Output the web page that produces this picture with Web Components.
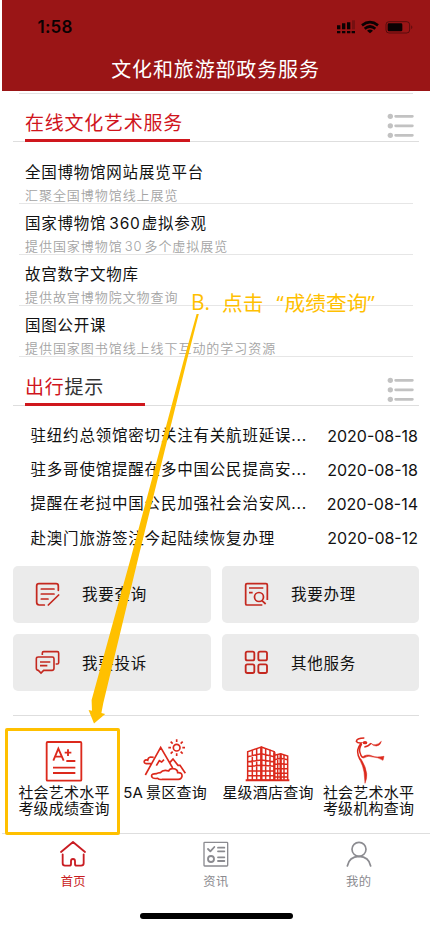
<!DOCTYPE html>
<html lang="zh-CN">
<head>
<meta charset="utf-8">
<title>文化和旅游部政务服务</title>
<style>
html,body{margin:0;padding:0;background:#fff}
body{font-family:Inter,"Noto Sans CJK SC",sans-serif;color:#111;width:432px;height:935px;overflow:hidden}
</style>
</head>
<body>
<service-app></service-app>
<script>
const define = (name, html) => {
  const t = document.createElement('template');
  t.innerHTML = html;
  customElements.define(name, class extends HTMLElement {
    constructor() {
      super();
      this.attachShadow({ mode: 'open' }).append(t.content.cloneNode(true));
    }
  });
};

define('status-bar', `<style>
:host{display:flex;height:53px;align-items:center;justify-content:space-between;padding:0 16px 0 35.5px;box-sizing:border-box;color:#0b0203}
b{font-size:17px;font-weight:600;line-height:20px;letter-spacing:.25px}
svg{display:block}
</style><b>1:58</b>
<svg width="78" height="16" viewBox="1010 54 234 48"><g fill="#0b0203">
<path d="M1013 90h10v7h-10zM1028 90h10v7h-10zM1043 90h10v7h-10zM1057 90h10v7h-10zM1013 73h10v12h-10zM1028 67h10v18h-10zM1043 64h10v21h-10z"/><path d="M1058 58h9v27h-9z" opacity=".25"/>
<path d="M1112 97l-9-8q9-7 18 0z"/></g>
<path d="M1088 73q24-19 48 0M1096 83q16-13 32 0" fill="none" stroke="#0b0203" stroke-width="8"/>
<rect x="1160" y="62" width="71" height="34" rx="9" fill="none" stroke="#0b0203" stroke-width="2.5" opacity=".55"/><rect x="1165" y="67" width="44" height="24" rx="4" fill="#0b0203"/><path d="M1236 73q6 6 0 12z" fill="#0b0203" opacity=".5"/></svg>`);

define('app-header', `<style>
:host{display:block;height:91px;margin:0 2px;background:#9a1516;color:#fff}
h1{margin:0;height:34px;line-height:34px;text-align:center;font-size:20px;font-weight:400;letter-spacing:.85px;padding-right:1px}
</style><status-bar></status-bar><h1><slot></slot></h1>`);

define('section-head', `<style>
:host{display:flex;justify-content:space-between;box-sizing:border-box;margin:0 13px;padding:0 4px 0 12px;border-bottom:1px solid #dedede;color:#333}
h2{margin:0 0 -1px;font-size:19px;font-weight:400;letter-spacing:.75px;line-height:37.5px;height:34px;border-bottom:3px solid #cf171d;width:var(--bar,165px)}
::slotted(em){font-style:normal;color:#d0151d}
svg{display:block;margin-top:7px}
</style><h2><slot></slot></h2>
<svg width="28" height="28" viewBox="0 0 84 84"><g fill="#c2c2c2"><circle cx="10" cy="13" r="8"/><circle cx="10" cy="41.5" r="8"/><circle cx="10" cy="70" r="8"/></g><path d="M26 13h50M26 41.500h50M26 70h50" stroke="#c2c2c2" stroke-width="8.5" stroke-linecap="round"/></svg>`);

define('service-row', `<style>
:host{display:block;box-sizing:border-box;height:51px;margin:0 19px;padding:9px 0 0 6px;border-bottom:1px solid #e6e6e6}
.t{font-size:15.5px;font-weight:400;line-height:22px;height:22px;letter-spacing:.77px;white-space:nowrap}
.s{font-size:13px;line-height:18px;height:18px;padding-top:2px;letter-spacing:.95px;color:#a4a4a4;font-weight:350;white-space:nowrap}
::slotted(i){font-style:normal;margin:0 1px 0 3px}
</style><div class="t"><slot></slot></div><div class="s"><slot name="sub"></slot></div>`);

define('notice-row', `<style>
:host{display:flex;justify-content:space-between;height:34.2px;line-height:34.2px;padding:0 14px 0 30.5px;font-size:15.5px;white-space:nowrap}
.t{letter-spacing:.8px}.d{font-size:16px;margin-top:-.5px}
</style><span class="t"><slot></slot></span><span class="d"><slot name="date"></slot></span>`);

define('action-card', `<style>
:host{display:flex;align-items:center;height:57px;background:#ebebeb;border-radius:5px;padding-left:22px;gap:22px;font-size:15.5px;letter-spacing:.75px;box-sizing:border-box}
span{margin-top:-2px}
::slotted(svg){display:block;width:25px;height:25px;fill:none;stroke:#c4281f;stroke-width:5.2}
</style><slot name="icon"></slot><span><slot></slot></span>`);

define('quick-link', `<style>
:host{display:flex;flex-direction:column;align-items:center;width:102px;text-align:center;font-size:15px;line-height:16px;letter-spacing:.2px;white-space:nowrap}
::slotted(svg){display:block;width:50px;height:50px;margin-bottom:-1px;fill:none;stroke:#dc291c;stroke-width:5.5}
</style><slot name="icon"></slot><div><slot></slot></div>`);

define('tab-item', `<style>
:host{display:flex;flex-direction:column;align-items:center;width:142.7px;color:#8b8b90;font-size:12.3px;line-height:18px;letter-spacing:.4px;padding-top:6px;box-sizing:border-box}
:host([active]){color:#c91c22}
::slotted(svg){display:block;width:28px;height:28px;margin-bottom:5px;fill:none;stroke:currentColor;stroke-width:5.5;stroke-linecap:round;stroke-linejoin:round}
</style><slot name="icon"></slot><span><slot></slot></span>`);

define('guide-overlay', `<style>
:host{position:absolute;inset:0;width:432px;height:935px;pointer-events:none;color:#ffc000}
.box{position:absolute;left:5px;top:728px;width:115px;height:107px;box-sizing:border-box;border:3px solid #ffc000;border-radius:2px}
svg{position:absolute;inset:0}
p{position:absolute;left:191px;top:287px;margin:0;font:400 20.7px/30px "Noto Sans CJK SC",sans-serif;white-space:nowrap;display:flex}
i{font-style:normal}
.b{font:400 21px/30px "Open Sans";width:31px}.q{font-family:"Open Sans"}
.l{margin-left:13px;margin-right:1px}
</style><svg width="432" height="935"><path d="M196.600 314L198.800 314L187 360L139 555L103.300 703L101.400 713L105.200 714L94 723.500L88.600 710L92 710.800L91.600 700L131.600 555L183.800 360Z" fill="#ffc000"/></svg><div class="box"></div><p><i class="b">B.</i><i>点击</i><i class="q l">“</i><i>成绩查询</i><i class="q">”</i></p>`);

define('service-app', `<style>
:host{display:block;position:relative;width:432px;height:935px;background:#fff}
.top{height:1px;background:#e2e2e2;margin:2px 19px 0}
.s1{margin-top:11px}.rows{padding-top:11px}
.s2{margin-top:12px;--bar:120px}
.notices{padding-top:13px}
.cards{display:grid;grid-template-columns:198px 197px;gap:11.5px 11px;padding:10px 13px 0}
.quick{display:flex;margin:24px 13px 0;border-top:1px solid #dedede;height:117px;padding-top:20px;box-sizing:border-box}
.quick quick-link{flex:none}
.quick quick-link:nth-child(2){margin:0 1px 0 -1px}
.quick quick-link:nth-child(4){margin-left:-1.5px}
.sp{margin-left:3px}
.tabs{display:flex;border-top:1px solid #dedede;margin:1px 2px 0;height:79px;box-sizing:border-box}
.home{width:153px;height:6px;border-radius:3px;background:#000;margin:1px 0 0 140px}
</style>
<app-header>文化和旅游部政务服务</app-header>
<div class="top"></div>
<section-head class="s1"><em>在线文化艺术服务</em></section-head>
<div class="rows">
<service-row>全国博物馆网站展览平台<span slot="sub">汇聚全国博物馆线上展览</span></service-row>
<service-row>国家博物馆<i>360</i>虚拟参观<span slot="sub">提供国家博物馆<span style="margin:0 2px">30</span>多个虚拟展览</span></service-row>
<service-row>故宫数字文物库<span slot="sub">提供故宫博物院文物查询</span></service-row>
<service-row>国图公开课<span slot="sub">提供国家图书馆线上线下互动的学习资源</span></service-row>
</div>
<section-head class="s2"><em>出行</em>提示</section-head>
<div class="notices">
<notice-row>驻纽约总领馆密切关注有关航班延误...<span slot="date">2020-08-18</span></notice-row>
<notice-row>驻多哥使馆提醒在多中国公民提高安...<span slot="date">2020-08-18</span></notice-row>
<notice-row>提醒在老挝中国公民加强社会治安风...<span slot="date">2020-08-14</span></notice-row>
<notice-row>赴澳门旅游签注今起陆续恢复办理<span slot="date">2020-08-12</span></notice-row>
</div>
<div class="cards">
<action-card><svg slot="icon" viewBox="105 82 75 75"><path d="M175 107V94q0-7-7-7h-51q-7 0-7 7v49q0 8 8 8h15M145 151l31-30M124 103h38M124 118h38M124 133h20" stroke-linecap="round"/></svg>我要查询</action-card>
<action-card><svg slot="icon" viewBox="96 82 75 75"><path d="M151 151h-46q-4 0-4-4V91q0-4 4-4h57q4 0 4 4v45M111 100h43M111 114h11M150 138l11 10"/><circle cx="141" cy="127" r="13.5"/></svg>我要办理</action-card>
<action-card><svg slot="icon" viewBox="105 287 75 75" style="stroke-width:4.800"><path d="M127 302v-6q0-4 4-4h41q4 0 4 4v29q0 4-4 4h-5M115 308h42q5 0 5 5v29q0 6-6 6h-25l-8 8-8-8q-6 0-6-6v-29q0-5 6-5zM120 323h31M120 334h22"/></svg>我要投诉</action-card>
<action-card><svg slot="icon" viewBox="96 287 75 75" style="stroke-width:5.500"><rect x="101" y="292" width="26" height="26" rx="5"/><rect x="139" y="292" width="26" height="26" rx="5"/><rect x="101" y="330" width="26" height="26" rx="5"/><rect x="139" y="330" width="26" height="26" rx="5"/></svg>其他服务</action-card>
</div>
<div class="quick">
<quick-link><svg slot="icon" viewBox="117 107 150 150"><rect x="140" y="125" width="104" height="116" rx="3"/><path d="M160 181l15-36 16 36M165 169h21M204 147v20M194 157h20M199 182h27M159 202h67M159 218h67"/></svg>社会艺术水平<br>考级成绩查询</quick-link>
<quick-link><svg slot="icon" viewBox="420 107 150 150" style="stroke-width:5"><path d="M436 224l46-83 36 62M510 186l9-10 15 19 6 0 16 24M454 190h-15q-8-2-6-8 4-5 10-2 1-9 9-10l9 1M492 178l-7 7-7-4-9 15M519 205q-10-1-13 7-17-5-25 5-8 1-11 3-17 0-15 8 2 8 18 6 5 5 14 3h46q11 1 13-9 1-12-13-11 0-11-14-12z"/><circle cx="530" cy="142" r="10"/><path d="M530 117v8M530 159v8M505 142h8M547 142h8M512 124l6 6M542 154l6 6M548 124l-6 6M518 154l-6 6"/></svg>5A<span class="sp">景区查询</span></quick-link>
<quick-link><svg slot="icon" viewBox="79 107 150 150" style="stroke-width:4.500"><path d="M87 240h131" stroke-width="6"/><path d="M93 240v-86l41-14v100zM134 140l39 14v86h-39z"/><path d="M107 150v88M120 145v93M147 143v95M160 148v90M93 169l41-9 39 9M93 184l41-5 39 5M93 198l41-3 39 3M93 212h80M93 226h80M173 165l19-5 21 7v73M183 162v76M202 164v74M173 178l19-4 21 4M173 192l19-2 21 2M173 205h40M173 219h40M173 230h40"/><path d="M134 140v100M173 156v84M192 160v80" stroke-width="7"/></svg>星级酒店查询</quick-link>
<quick-link><svg slot="icon" viewBox="384 107 150 150" style="stroke-width:4.500"><path d="M445 113q-23 0-24 10 3 6 15 5-12 15-11 27 0 9 7 22M437 131q-9 16-5 26 2 10 8 15"/><path d="M429 174q13 24 15 41l3 34q7-16 5-30-3-22-17-43zM438 171q14-12 31-4 11 5 35 1l-3 12q-17-10-30-10-15-6-28 3zM465 129q7 6 13 4 11-1 18-10-2 12-14 14-11 1-17-8z" fill="#dc291c" stroke-width="1.500"/><ellipse cx="447" cy="127" rx="7" ry="5" fill="#dc291c" stroke="none"/><path d="M465 129q-8 10-20 11"/></svg>社会艺术水平<br>考级机构查询</quick-link>
</div>
<div class="tabs">
<tab-item active><svg slot="icon" viewBox="180 30 84 84"><path d="M186 66l36-30 36 30M191 73v27q0 7 7 7h13q5 0 5-5v-8q0-7 6-7t6 7v8q0 5 5 5h13q8 0 8-7V73"/></svg>首页</tab-item>
<tab-item><svg slot="icon" viewBox="608 30 84 84"><rect x="614" y="37" width="71" height="71" rx="2" stroke-width="4"/><path d="M626 57l7 7 12-13M656 53h19M656 64h19M656 82h19M656 93h19"/><circle cx="635" cy="87" r="9"/></svg>资讯</tab-item>
<tab-item><svg slot="icon" viewBox="1036 30 84 84" style="stroke-width:5"><circle cx="1078" cy="58" r="21"/><path d="M1043 108q5-28 35-29 30 1 35 29"/></svg>我的</tab-item>
</div>
<div class="home"></div>
<guide-overlay></guide-overlay>`);
</script>
</body>
</html>
